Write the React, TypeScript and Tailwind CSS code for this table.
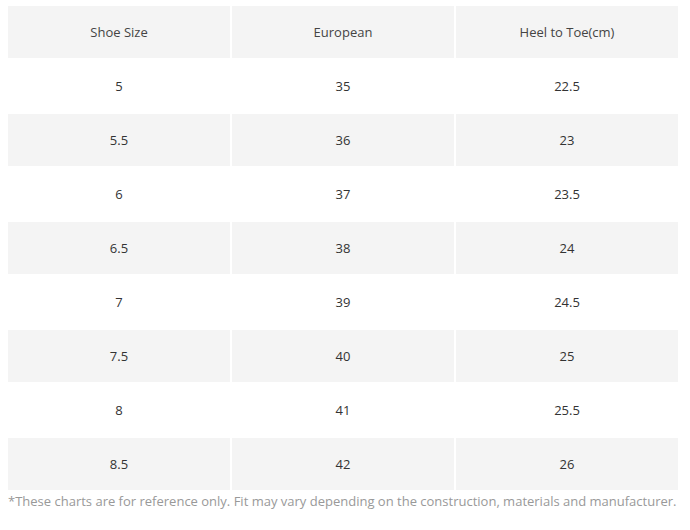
const rows: [string, string, string][] = [
  ['5', '35', '22.5'],
  ['5.5', '36', '23'],
  ['6', '37', '23.5'],
  ['6.5', '38', '24'],
  ['7', '39', '24.5'],
  ['7.5', '40', '25'],
  ['8', '41', '25.5'],
  ['8.5', '42', '26'],
]

export default function App() {
  const cell = 'h-[52px] w-[222px] px-0 pt-[2px] pb-0 text-center align-middle font-normal'
  return (
    <div className="bg-white pl-[6px] pr-[8px] pt-1 text-[13px] text-[#333] font-['Open_Sans',sans-serif]">
      <table className="w-[672px] table-fixed border-separate border-spacing-[2px]">
        <thead>
          <tr className="bg-[#f4f4f4] text-[#444]">
            <th className={cell}>Shoe Size</th>
            <th className={cell}>European</th>
            <th className={cell}>Heel to Toe(cm)</th>
          </tr>
        </thead>
        <tbody>
          {rows.map((r, i) => (
            <tr key={r[0]} className={i % 2 === 1 ? 'bg-[#f4f4f4]' : 'bg-white'}>
              <td className={cell}>{r[0]}</td>
              <td className={cell}>{r[1]}</td>
              <td className={cell}>{r[2]}</td>
            </tr>
          ))}
        </tbody>
      </table>
      <p className="pl-[2px] text-[#999] leading-[18px]">
        *These charts are for reference only. Fit may vary depending on the construction, materials and manufacturer.
      </p>
    </div>
  )
}
